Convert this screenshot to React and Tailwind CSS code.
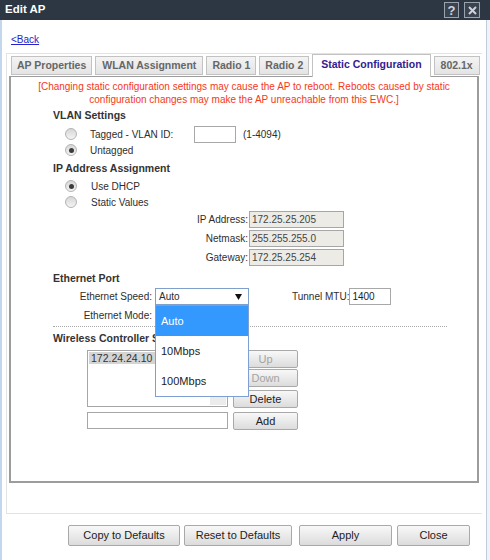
import React from "react";

function Radio({ checked }) {
  return (
    <span className="w-[12px] h-[12px] rounded-full border border-[#b4b4b4] bg-linear-to-b from-[#d6d6d6] to-[#f4f4f4] flex items-center justify-center shrink-0">
      {checked && <span className="w-[5px] h-[5px] rounded-full bg-[#3c3c3c]" />}
    </span>
  );
}

function Btn({ children, className = "", disabled = false }) {
  return (
    <div
      className={
        "border border-[#a9a9a9] rounded-[2px] bg-linear-to-b from-[#f8f8f8] to-[#dcdcdc] flex items-center justify-center text-[11px] " +
        (disabled ? "text-[#a3a3a3] " : "text-[#222] ") +
        className
      }
    >
      {children}
    </div>
  );
}

export default function App() {
  return (
    <div className="w-[490px] h-[560px] bg-[#eef3f9] font-['Liberation_Sans',Arial,sans-serif] text-[10px] text-[#2e2e2e] overflow-hidden">
      {/* Title bar */}
      <div className="h-[20px] bg-[#2d3643] flex items-center pl-[5px] pr-[10px]">
        <span className="text-white font-bold text-[11.5px] leading-none">Edit AP</span>
        <div className="ml-auto flex gap-[5px]">
          <div className="w-[15px] h-[16px] border border-[#9aa2ac] bg-[#3a4350] flex items-center justify-center text-[#d0d4d9] font-bold text-[13px] leading-none">
            ?
          </div>
          <div className="w-[16px] h-[16px] border border-[#9aa2ac] bg-[#3a4350] flex items-center justify-center">
            <svg width="9" height="9" viewBox="0 0 9 9">
              <path d="M1 1L8 8M8 1L1 8" stroke="#d0d4d9" strokeWidth="2" />
            </svg>
          </div>
        </div>
      </div>

      <div className="flex h-[540px]">
        <div className="w-[2px] bg-[#c4d6ec]" />
        <div className="w-[484px] bg-white flex flex-col">
          <div className="h-[14px]" />
          <div className="pl-[9px] h-[12px] leading-[12px]">
            <span className="text-[#2424c8] underline">&lt;Back</span>
          </div>

          {/* Frame */}
          <div className="mt-[7px] ml-[4px] w-[476px] h-[461px] border-t border-b border-l border-[#e3e3e3] flex flex-col">
            {/* Tabs */}
            <div className="h-[22px] pl-[4px] flex items-end gap-[3px]">
              <div className="h-[19px] mb-[1px] px-[5px] border border-[#c2c2c2] bg-linear-to-b from-[#f4f4f4] to-[#e4e4e4] flex items-center font-bold text-[10.5px] text-[#666]">
                AP Properties
              </div>
              <div className="h-[19px] mb-[1px] px-[6px] border border-[#c2c2c2] bg-linear-to-b from-[#f4f4f4] to-[#e4e4e4] flex items-center font-bold text-[10.5px] text-[#666]">
                WLAN Assignment
              </div>
              <div className="h-[19px] mb-[1px] px-[5px] border border-[#c2c2c2] bg-linear-to-b from-[#f4f4f4] to-[#e4e4e4] flex items-center font-bold text-[10.5px] text-[#666]">
                Radio 1
              </div>
              <div className="h-[19px] mb-[1px] px-[5px] border border-[#c2c2c2] bg-linear-to-b from-[#f4f4f4] to-[#e4e4e4] flex items-center font-bold text-[10.5px] text-[#666]">
                Radio 2
              </div>
              <div className="relative z-10 h-[23px] -mb-[1px] px-[8px] border border-b-0 border-[#c2c2c2] bg-white flex items-center pb-[2px] font-bold text-[10.5px] text-[#33208f]">
                Static Configuration
              </div>
              <div className="h-[19px] mb-[1px] px-[6px] border border-[#c2c2c2] bg-linear-to-b from-[#f4f4f4] to-[#e4e4e4] flex items-center font-bold text-[10.5px] text-[#666]">
                802.1x
              </div>
            </div>

            {/* Panel */}
            <div className="ml-[2px] w-[470px] h-[407px] border-t border-l-2 border-r-2 border-b-2 border-[#9c9c9c] flex flex-col">
              <div className="pt-[3px] text-center leading-[13px] text-[#f5381c]">
                [Changing static configuration settings may cause the AP to reboot. Reboots caused by static
                <br />
                configuration changes may make the AP unreachable from this EWC.]
              </div>

              <div className="mt-[2px] h-[14px] leading-[14px] pl-[42px] font-bold text-[10.5px] text-[#333]">VLAN Settings</div>

              <div className="mt-[3px] h-[18px] flex items-center pl-[54px]">
                <Radio />
                <span className="ml-[13px] w-[104px]">Tagged - VLAN ID:</span>
                <div className="w-[42px] h-[17px] border border-[#a8a8a8] bg-white" />
                <span className="ml-[7px]">(1-4094)</span>
              </div>
              <div className="h-[14px] flex items-center pl-[54px]">
                <Radio checked />
                <span className="ml-[13px]">Untagged</span>
              </div>

              <div className="mt-[4px] h-[14px] leading-[14px] pl-[42px] font-bold text-[10.5px] text-[#333]">IP Address Assignment</div>

              <div className="mt-[3px] h-[16px] flex items-center pl-[54px]">
                <Radio checked />
                <span className="ml-[14px]">Use DHCP</span>
              </div>
              <div className="h-[16px] flex items-center pl-[54px]">
                <Radio />
                <span className="ml-[14px]">Static Values</span>
              </div>

              <div className="mt-[1px] flex flex-col gap-[2px]">
                {[
                  ["IP Address:", "172.25.25.205"],
                  ["Netmask:", "255.255.255.0"],
                  ["Gateway:", "172.25.25.254"],
                ].map(([l, v]) => (
                  <div key={l} className="h-[17px] flex items-center">
                    <span className="w-[237px] text-right">{l}</span>
                    <div className="ml-[1px] w-[95px] h-[17px] border border-[#a6a6a6] bg-[#ecebe6] flex items-center pl-[2px] text-[#444]">
                      {v}
                    </div>
                  </div>
                ))}
              </div>

              <div className="mt-[5px] h-[14px] leading-[14px] pl-[42px] font-bold text-[10.5px] text-[#333]">Ethernet Port</div>

              <div className="mt-[3px] h-[17px] flex items-center">
                <span className="w-[141px] text-right">Ethernet Speed:</span>
                <div className="relative ml-[3px] w-[94px] h-[17px]">
                  <div className="w-full h-full border border-[#7fa0cc] bg-white flex items-center pl-[3px] pr-[6px]">
                    <span>Auto</span>
                    <svg className="ml-auto" width="7" height="6" viewBox="0 0 7 6">
                      <path d="M0 0H7L3.5 6Z" fill="#111" />
                    </svg>
                  </div>
                  <div className="absolute left-0 top-full w-[94px] border border-[#7f9fd3] bg-white z-20 text-[11px] text-[#222]">
                    <div className="h-[30px] flex items-center pl-[5px] pt-[1px] bg-[#3399ff] text-white">Auto</div>
                    <div className="h-[30px] flex items-center pl-[5px] pt-[1px]">10Mbps</div>
                    <div className="h-[30px] flex items-center pl-[5px] pt-[1px]">100Mbps</div>
                  </div>
                </div>
                <span className="ml-[43px]">Tunnel MTU:</span>
                <div className="w-[42px] h-[17px] border border-[#a8a8a8] bg-white flex items-center pl-[2px] text-[#222]">1400</div>
              </div>

              <div className="mt-[3px] h-[14px] flex items-center">
                <span className="w-[141px] text-right">Ethernet Mode:</span>
              </div>

              <div className="mt-[4px] ml-[42px] w-[394px] border-t border-dotted border-[#a8a8a8]" />

              <div className="mt-[4px] h-[14px] leading-[14px] pl-[42px] font-bold text-[10.5px] text-[#333]">
                Wireless Controller Search List
              </div>

              <div className="mt-[5px] pl-[76px] flex">
                <div className="relative w-[141px] h-[57px] border border-[#a6a6a6] bg-white p-[1px]">
                  <div className="h-[12px] bg-[#d4d4d4] pl-[2px] leading-[12px] text-[10.5px] text-[#333]">172.24.24.10</div>
                  <div className="absolute right-[1px] bottom-[1px] w-[16px] h-[9px] bg-[#ececec]" />
                </div>
                <div className="ml-[5px] w-[65px] flex flex-col">
                  <Btn disabled className="h-[18px]">Up</Btn>
                  <Btn disabled className="h-[18px] mt-[1px]">Down</Btn>
                  <Btn className="h-[18px] mt-[3px]">Delete</Btn>
                </div>
              </div>
              <div className="mt-[4px] pl-[76px] flex">
                <div className="w-[141px] h-[17px] border border-[#a6a6a6] bg-white" />
                <Btn className="ml-[5px] w-[65px] h-[18px]">Add</Btn>
              </div>
            </div>
          </div>

          {/* Bottom buttons */}
          <div className="mt-[11px] flex">
            <Btn className="ml-[66px] w-[112px] h-[21px]">Copy to Defaults</Btn>
            <Btn className="ml-[4px] w-[108px] h-[21px]">Reset to Defaults</Btn>
            <Btn className="ml-[7px] w-[93px] h-[21px]">Apply</Btn>
            <Btn className="ml-[5px] w-[73px] h-[21px]">Close</Btn>
          </div>
        </div>
        <div className="w-[1px] bg-[#c3cdda]" />
        <div className="flex-1 bg-[#eef3f9]" />
      </div>
    </div>
  );
}
